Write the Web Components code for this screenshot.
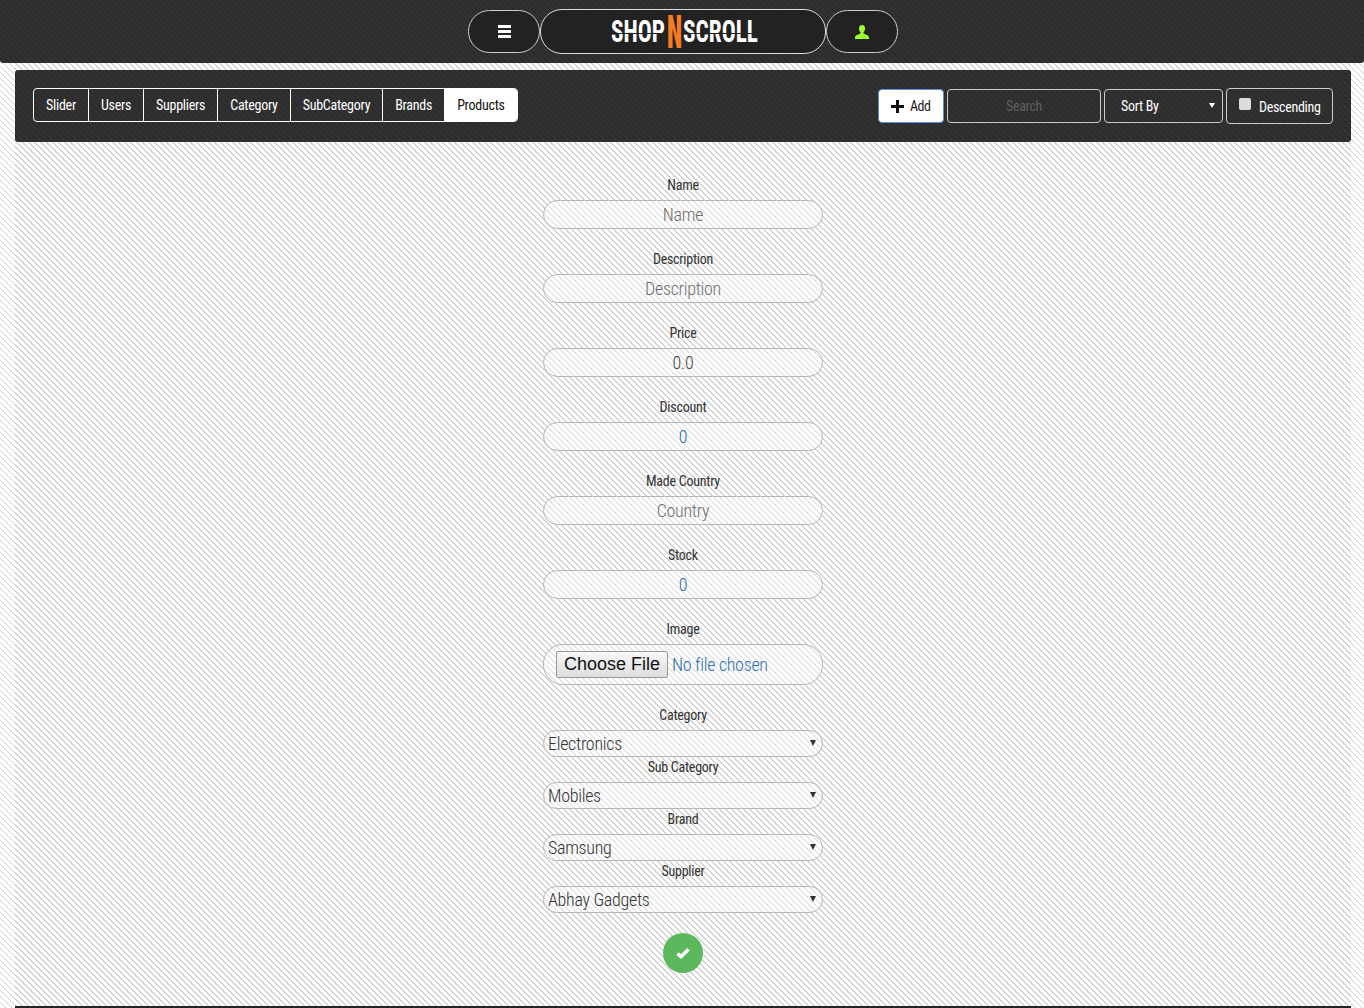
<!doctype html>
<html>
<head>
<meta charset="utf-8">
<style>
  html, body { margin: 0; height: 1008px; overflow: hidden; }
  body {
    background-color: #fff;
    background-image: url("data:image/svg+xml,%3Csvg xmlns='http://www.w3.org/2000/svg' width='6' height='6' shape-rendering='crispEdges'%3E%3Cpath fill='%23cfcfcf' d='M0 0h1v1H0zM1 1h1v1H1zM2 2h1v1H2zM3 3h1v1H3zM4 4h1v1H4zM5 5h1v1H5z'/%3E%3C/svg%3E");
    font-family: "Roboto Condensed", "Liberation Sans", sans-serif;
    color: #333;
  }
</style>
</head>
<body>
<sns-header></sns-header>
<sns-main>
  <sns-toolbar>
    <sns-tab>Slider</sns-tab>
    <sns-tab>Users</sns-tab>
    <sns-tab>Suppliers</sns-tab>
    <sns-tab>Category</sns-tab>
    <sns-tab>SubCategory</sns-tab>
    <sns-tab>Brands</sns-tab>
    <sns-tab active>Products</sns-tab>
  </sns-toolbar>
  <sns-form>
    <sns-field label="Name" placeholder="Name"></sns-field>
    <sns-field label="Description" placeholder="Description"></sns-field>
    <sns-field label="Price" value="0.0"></sns-field>
    <sns-field label="Discount" value="0" tone="blue"></sns-field>
    <sns-field label="Made Country" placeholder="Country"></sns-field>
    <sns-field label="Stock" value="0" tone="blue"></sns-field>
    <sns-file label="Image"></sns-file>
    <sns-choice label="Category" value="Electronics"></sns-choice>
    <sns-choice label="Sub Category" value="Mobiles"></sns-choice>
    <sns-choice label="Brand" value="Samsung"></sns-choice>
    <sns-choice label="Supplier" value="Abhay Gadgets"></sns-choice>
  </sns-form>
</sns-main>
<script>
const wide = "M0 0h2v1H0zM1 1h2v1H1zM2 2h2v1H2zM3 3h2v1H3zM4 4h2v1H4zM5 5h1v1H5zM0 5h1v1H0z";
const thin = "M0 0h1v1H0zM1 1h1v1H1zM2 2h1v1H2zM3 3h1v1H3zM4 4h1v1H4zM5 5h1v1H5z";
const stripes = (color, shape) => `url("data:image/svg+xml,%3Csvg xmlns='http://www.w3.org/2000/svg' width='6' height='6' shape-rendering='crispEdges'%3E%3Cpath fill='%23${color}' d='${shape}'/%3E%3C/svg%3E")`;
const darkStripes = `background-color: #313131; background-image: ${stripes("2b2b2b", wide)};`;

const userIcon = `<svg width="14" height="14" viewBox="0 0 14 14"><path fill="#9dff2f" d="M7 0c2 0 3 1.400 3 3.400 0 1.500-.6 3-1.500 3.800v1.300C10 9.400 14 10 14 12.500V14H0v-1.500C0 10 4 9.400 5.500 8.500V7.200C4.600 6.400 4 4.900 4 3.400 4 1.400 5 0 7 0z"/></svg>`;

class SnsHeader extends HTMLElement {
  constructor() {
    super();
    this.attachShadow({ mode: "open" }).innerHTML = `
      <style>
        :host { display: flex; box-sizing: border-box; justify-content: center; align-items: center; height: 63px; padding-left: 2px; ${darkStripes} border-radius: 0 0 3px 3px; }
        .pill { box-sizing: border-box; display: flex; align-items: center; justify-content: center; width: 72px; height: 43px; border: 1px solid #ccc; border-radius: 22px; background: #222; }
        .logo { position: relative; width: 286px; height: 45px; font: bold 31px/1 "Roboto Condensed", sans-serif; color: #fff; border-color: #ddd; }
        .logo span { display: block; transform-origin: left; white-space: nowrap; }
        .shop { width: 54px; padding-left: 1px; }
        .shop span { transform: scaleX(.75); }
        .scroll { width: 74px; }
        .scroll span { transform: scaleX(.75); }
        .logo b { position: relative; z-index: 1; display: flex; justify-content: center; width: 15px; margin: 0 1px 0 2px; color: #f57c20; font-size: 46px; transform: scaleX(.54); }
        .slit { position: absolute; left: 70px; right: 68px; top: 23px; height: 1px; background: #222; }
        .bars { display: grid; gap: 2px; width: 13px; }
        .bars i { display: block; height: 3px; background: #fff; }
      </style>
      <div class="pill"><div class="bars"><i></i><i></i><i></i></div></div>
      <div class="pill logo"><div class="shop"><span>SHOP</span></div><b>N</b><div class="scroll"><span>SCROLL</span></div><div class="slit"></div></div>
      <div class="pill">${userIcon}</div>`;
  }
}

class SnsMain extends HTMLElement {
  constructor() {
    super();
    this.attachShadow({ mode: "open" }).innerHTML = `
      <style>
        :host { display: block; box-sizing: border-box; height: 945px; margin: 0 13px 0 15px; padding-top: 7px; border-bottom: 2px solid #222; background-image: ${stripes("d8d8d8", thin)}; background-position: 1px 0; }
      </style>
      <slot></slot>`;
  }
}

class SnsToolbar extends HTMLElement {
  constructor() {
    super();
    this.attachShadow({ mode: "open" }).innerHTML = `
      <style>
        :host { display: flex; box-sizing: border-box; height: 72px; padding: 18px; ${darkStripes} border-radius: 3px; align-items: center; justify-content: space-between; font-size: 14px; letter-spacing: -.3px; color: #fff; }
        .tabs { display: flex; border: 1px solid #fff; border-radius: 4px; overflow: hidden; margin: -1px 0 1px; }
        .right { display: flex; align-items: center; gap: 3px; }
        .box { box-sizing: border-box; height: 34px; border: 1px solid #ccc; border-radius: 4px; display: flex; align-items: center; }
        .add { width: 66px; background: #fff; color: #222; border-color: #5a8fd8; padding-left: 12px; gap: 6px; letter-spacing: -.5px; }
        .search { width: 154px; justify-content: center; color: #5f5f5f; }
        .sort { width: 119px; padding: 0 7px 0 16px; justify-content: space-between; }
        .sort i { display: block; border: 3px solid transparent; border-top: 5px solid #fff; border-bottom: 0; margin-top: -1px; }
        .desc { width: 107px; height: 36px; padding-left: 12px; gap: 8px; }
        .desc span { margin-top: 2px; }
        .desc i { display: block; width: 12px; height: 12px; background: #ddd; border-radius: 2px; margin-top: -5px; }
      </style>
      <div class="tabs"><slot></slot></div>
      <div class="right">
        <div class="box add"><svg width="13" height="13" viewBox="0 0 13 13"><path fill="#111" d="M5 0h3v5h5v3H8v5H5V8H0V5h5z"/></svg>Add</div>
        <div class="box search">Search</div>
        <div class="box sort">Sort By<i></i></div>
        <div class="box desc"><i></i><span>Descending</span></div>
      </div>`;
  }
}

class SnsTab extends HTMLElement {
  constructor() {
    super();
    this.attachShadow({ mode: "open" }).innerHTML = `
      <style>
        :host { display: block; box-sizing: border-box; height: 32px; line-height: 32px; padding: 0 12px; border-left: 1px solid #fff; font-size: 14px; letter-spacing: -.26px; color: #fff; }
        :host(:first-child) { border-left: 0; }
        :host([active]) { background: #fff; color: #111; }
      </style>
      <slot></slot>`;
  }
}

class SnsForm extends HTMLElement {
  constructor() {
    super();
    this.attachShadow({ mode: "open" }).innerHTML = `
      <style>
        :host { display: block; width: 280px; margin: 0 auto; padding-top: 33px; }
        .ok { display: flex; align-items: center; justify-content: center; width: 40px; height: 40px; margin: 20px auto 0; border-radius: 50%; background: #5cb85c; }
      </style>
      <slot></slot>
      <div class="ok"><svg width="14" height="12" viewBox="0 0 14 12"><path fill="none" stroke="#fff" stroke-width="3.600" d="M1.500 6.500l3.500 3.200 7.500-7.500"/></svg></div>`;
  }
}

const fieldStyle = `
  :host { display: block; text-align: center; }
  label { display: block; font-size: 14px; letter-spacing: -.25px; line-height: 21px; height: 25px; color: #333; }
  .control { box-sizing: border-box; border: 1px solid #b5b5b5; border-radius: 15px; font-size: 18px; font-weight: 300; letter-spacing: -.3px; display: flex; align-items: center; background: rgba(255, 255, 255, .4); }
`;

class SnsField extends HTMLElement {
  constructor() {
    super();
    const value = this.getAttribute("value");
    const color = this.getAttribute("tone") === "blue" ? "#1f6aa8" : value ? "#444" : "#6f6f6f";
    this.attachShadow({ mode: "open" }).innerHTML = `
      <style>${fieldStyle}
        :host { height: 74px; }
        .control { height: 29px; justify-content: center; color: ${color}; }
      </style>
      <label>${this.getAttribute("label")}</label>
      <div class="control">${value || this.getAttribute("placeholder")}</div>`;
  }
}

class SnsFile extends HTMLElement {
  constructor() {
    super();
    this.attachShadow({ mode: "open" }).innerHTML = `
      <style>${fieldStyle}
        :host { height: 86px; }
        .control { height: 41px; border-radius: 20px; padding-left: 12px; gap: 4px; color: #2a6fad; }
        button { box-sizing: border-box; height: 27px; width: 112px; padding: 0; border: 1px solid #999; border-radius: 2px; background: linear-gradient(#f8f8f8, #ddd); font: 18px "Liberation Sans", sans-serif; letter-spacing: 0; color: #111; }
      </style>
      <label>${this.getAttribute("label")}</label>
      <div class="control"><button type="button">Choose File</button>No file chosen</div>`;
  }
}

class SnsChoice extends HTMLElement {
  constructor() {
    super();
    this.attachShadow({ mode: "open" }).innerHTML = `
      <style>${fieldStyle}
        :host { height: 52px; }
        .control { height: 27px; justify-content: space-between; padding: 0 6px 0 4px; border-radius: 14px; color: #333; }
        i { display: block; border: 3px solid transparent; border-top: 6px solid #333; border-bottom: 0; margin-top: -2px; }
      </style>
      <label>${this.getAttribute("label")}</label>
      <div class="control">${this.getAttribute("value")}<i></i></div>`;
  }
}

customElements.define("sns-header", SnsHeader);
customElements.define("sns-main", SnsMain);
customElements.define("sns-toolbar", SnsToolbar);
customElements.define("sns-tab", SnsTab);
customElements.define("sns-form", SnsForm);
customElements.define("sns-field", SnsField);
customElements.define("sns-file", SnsFile);
customElements.define("sns-choice", SnsChoice);
</script>
</body>
</html>
